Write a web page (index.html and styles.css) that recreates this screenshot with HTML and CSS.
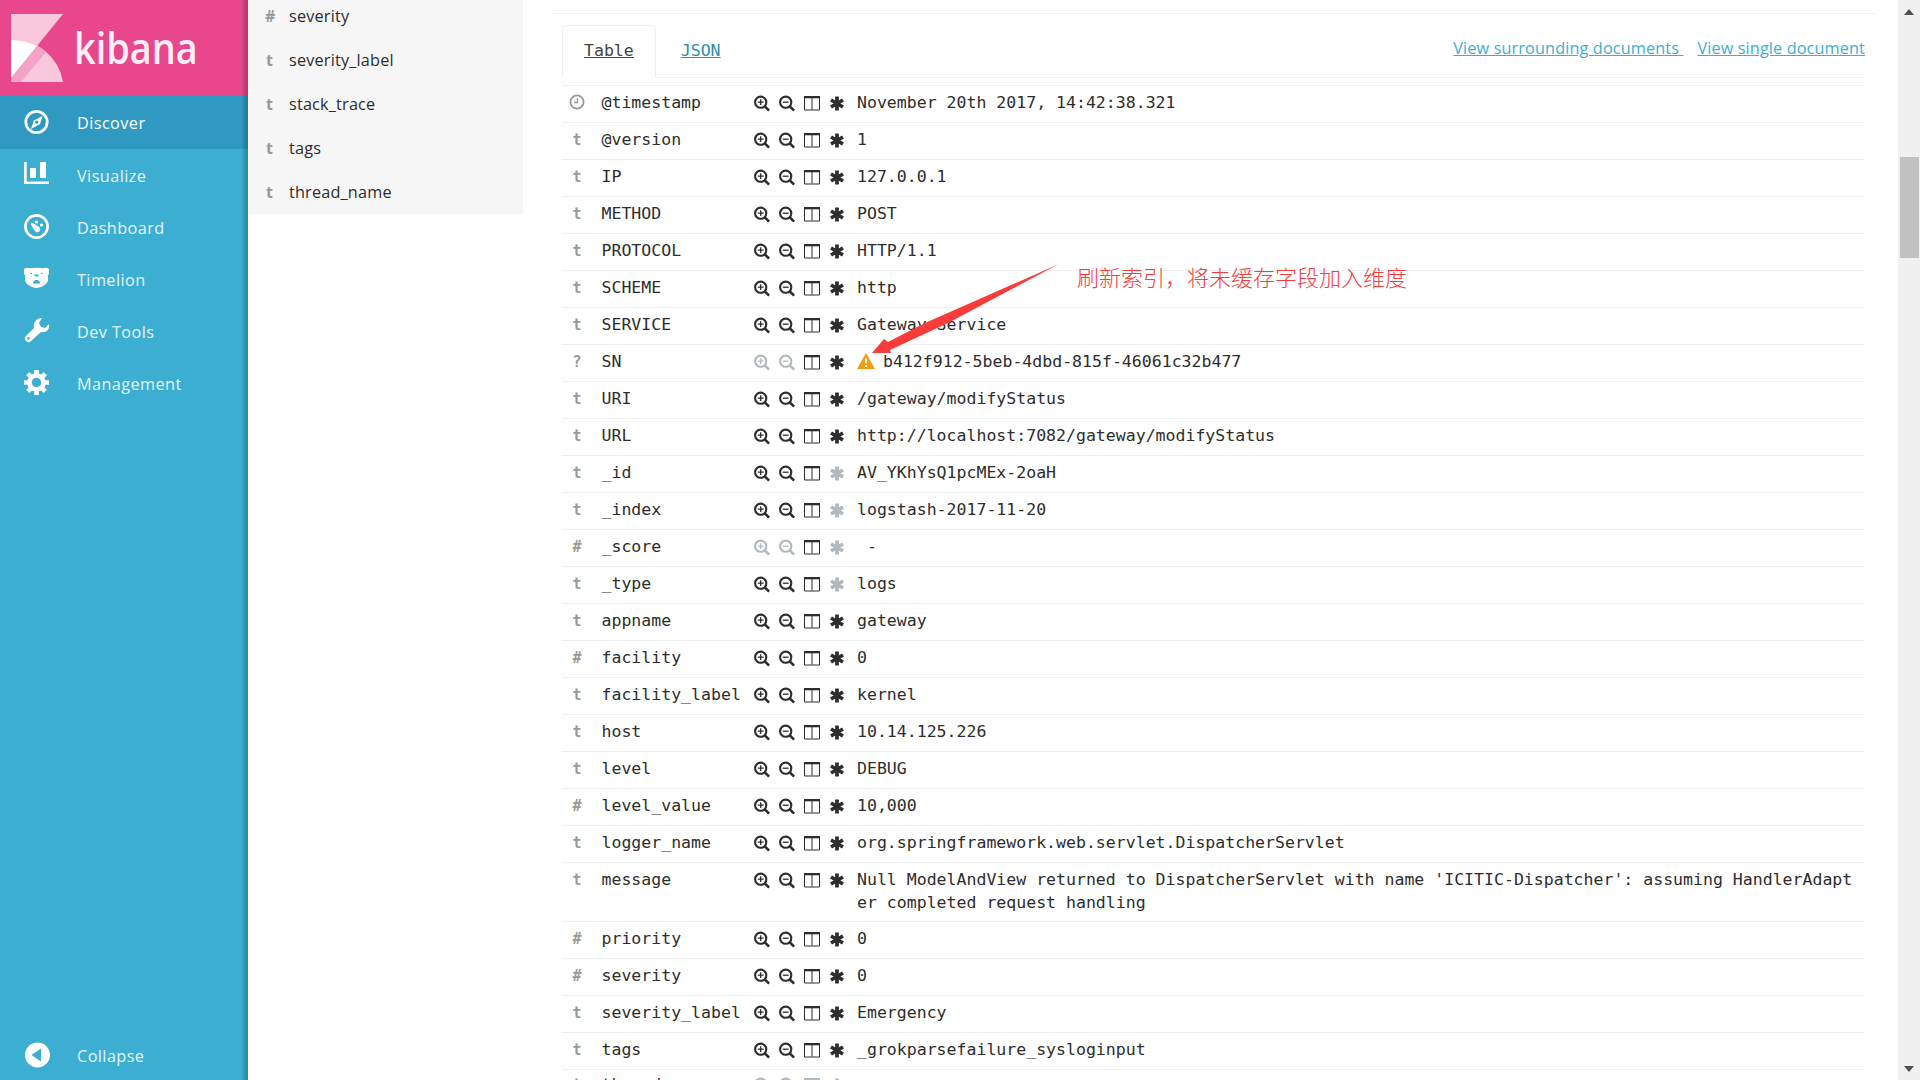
FILE: index.html
```html
<!DOCTYPE html>
<html lang="en">
<head>
<meta charset="utf-8">
<title>Kibana</title>
<link rel="stylesheet" href="styles.css">
</head>
<body>
<svg class="defs" aria-hidden="true">
  <symbol id="plus" viewBox="0 0 16 16"><circle cx="6.7" cy="6.7" r="5.6" fill="none" stroke="currentColor" stroke-width="2.1"/><path d="M10.8 10.8l4.300 4.300" stroke="currentColor" stroke-width="2.6"/><path d="M3.8 6.7h5.8M6.7 3.8v5.8" stroke="currentColor" stroke-width="1.3"/></symbol>
  <symbol id="minus" viewBox="0 0 16 16"><circle cx="6.7" cy="6.7" r="5.6" fill="none" stroke="currentColor" stroke-width="2.1"/><path d="M10.8 10.8l4.300 4.300" stroke="currentColor" stroke-width="2.6"/><path d="M3.8 6.7h5.8" stroke="currentColor" stroke-width="1.3"/></symbol>
  <symbol id="cols" viewBox="0 0 16 16"><path d="M.5 1h15v13.500H.5zM8 1v13" fill="none" stroke="currentColor" stroke-width="1"/><path d="M0 .5h16v2.300H0z" fill="currentColor"/></symbol>
  <symbol id="star" viewBox="0 0 16 16"><path d="M8 1v14M2 4.500l12 7M14 4.500l-12 7" stroke="currentColor" stroke-width="3.700"/></symbol>
</svg>
<div class="app">
  <nav class="side">
    <div class="brand">
      <svg class="mark" width="52" height="68" viewBox="0 0 52 68"><path d="M0 0h52L0 64z" fill="#f9c8dc"/><path d="M0 26a50 50 0 0 1 52 42H0z" fill="#f9c8dc"/><path d="M0 26q13 0 26 6L0 64z" fill="#fff"/><path d="M26 32q5 3 9 6L10 68H0v-4z" fill="#f4a3c6"/></svg>
      <span class="word">kibana</span>
    </div>
    <a class="item on"><svg width="26" height="26" viewBox="0 0 26 26"><circle cx="12.500" cy="13" r="10.700" fill="none" stroke="#fff" stroke-width="2.700"/><path fill-rule="evenodd" d="M18.500 7l-2.500 8-9 5 2.700-8.500zM12.700 11.500a1.600 1.600 0 1 0 .1 0z" fill="#fff"/></svg><span>Discover</span></a>
    <a class="item"><svg width="26" height="26" viewBox="0 0 26 26"><path d="M0 0h2.700v19.500H25V22H0zM6 6h6v10H6zM16 0h6v16h-6z" fill="#fff"/></svg><span>Visualize</span></a>
    <a class="item"><svg width="26" height="26" viewBox="0 0 26 26"><circle cx="12.500" cy="12.500" r="11.100" fill="none" stroke="#fff" stroke-width="2.700"/><g fill="#fff"><path d="M6.500 10l1.500-1.500 6.500 4a3 3 0 1 1-4 4z"/><circle cx="12.500" cy="8" r="1.600"/><circle cx="17.500" cy="11" r="1.600"/></g></svg><span>Dashboard</span></a>
    <a class="item"><svg width="26" height="26" viewBox="0 0 26 26"><path d="M0 3q3-2 6-.7 6.500-1.300 13 0Q22 1 25 3v5l-1 1v6q-3 6-11.500 7Q4 21 1 15V9L0 8z" fill="#fff"/><path d="M6 7l2 .7M19 7l-2 .7M10.500 9h4l-2 1.500zM9 17l2-2.500h3l2 2.500z" stroke="#3caed2" fill="#3caed2"/></svg><span>Timelion</span></a>
    <a class="item"><svg width="26" height="26" viewBox="0 0 26 26"><path fill-rule="evenodd" d="M18 0l-3 5 2 4 4 1 4-4c1 6-3 9-8 8L7 23a3 3 0 0 1-5-5l8-8C9 4 13 0 18 0zM4.500 19a1.300 1.300 0 1 0 .1 0z" fill="#fff"/></svg><span>Dev Tools</span></a>
    <a class="item"><svg width="26" height="26" viewBox="0 0 26 26"><circle cx="12.500" cy="12.500" r="7" fill="none" stroke="#fff" stroke-width="4.500"/><path d="M12.500 0v5M12.500 20v5M0 12.500h5M20 12.500h5M3.700 3.700l3.500 3.500M17.800 17.800l3.500 3.500M21.300 3.700l-3.500 3.500M7.200 17.800l-3.500 3.500" stroke="#fff" stroke-width="4.600"/></svg><span>Management</span></a>
    <a class="item collapse"><svg width="26" height="26" viewBox="0 0 26 26"><circle cx="13.500" cy="13" r="12.500" fill="#fff"/><path d="M7.500 13L17 6.500v13z" fill="#3caed2"/></svg><span>Collapse</span></a>
  </nav>
  <aside class="fields">
    <div><b>#</b>severity</div><div><b>t</b>severity_label</div><div><b>t</b>stack_trace</div><div><b>t</b>tags</div><div><b>t</b>thread_name</div>
  </aside>
  <main class="doc">
    <div class="detail">
      <div class="tabs"><a class="tab active">Table</a><a class="tab">JSON</a><span class="links"><a>View surrounding documents&nbsp;</a><a>View single document</a></span></div>
      <div class="rows" id="rows"></div>
    </div>
    <svg class="arrow" width="190" height="94" viewBox="0 0 190 94"><path d="M-1 89L11 75l4 3 37-19L186 0 75 59 17 86l1 3z" fill="#fb3a3a"/></svg>
    <div class="note">刷新索引，将未缓存字段加入维度</div>
  </main>
  <div class="scroll"><i class="up"></i><i class="thumb"></i><i class="down"></i></div>
</div>
<script src="rows.js"></script>
</body>
</html>
```
FILE: styles.css
```css
* { box-sizing: border-box; }
body { margin: 0; font-family: "Open Sans", "Noto Sans CJK SC", sans-serif; color: #2d2d2d; background: #fff; overflow: hidden; }
.defs { position: absolute; width: 0; height: 0; }
.app { display: flex; width: 1920px; height: 1080px; overflow: hidden; }
.side { width: 248px; background: linear-gradient(to right, transparent 241px, rgba(0,0,0,.2) 246px), #3caed2; display: flex; flex-direction: column; flex: none; }
.brand { height: 96px; padding: 14px 0 0 11px; display: flex; background: linear-gradient(to right, transparent 241px, rgba(0,0,0,.2) 246px), #e8488b; }
.word { margin: 0 0 0 11px; font: 600 43px/68px "Open Sans", sans-serif; color: #fdeef5; transform-origin: left; transform: scaleX(.88); }
.item { height: 52.2px; display: flex; align-items: center; padding-left: 24px; font-size: 16.250px; letter-spacing: .42px; color: #e4f4f9; flex: none; }
.item svg { margin-right: 27px; margin-top: -1px; }
.item span { padding-top: 1px; }
.item.on { height: 53px; background: linear-gradient(to right, transparent 241px, rgba(0,0,0,.2) 246px), #3099c2; color: #fff; }
.collapse { margin-top: auto; margin-bottom: -2px; }
.fields { width: 275px; height: 214px; background: #f6f6f6; overflow: hidden; flex: none; }
.fields div { height: 44px; line-height: 44px; padding-left: 15px; font-size: 16.250px; letter-spacing: .18px; display: flex; }
.fields div:first-child { margin-top: -6px; }
.fields b { width: 26px; padding-left: 3px; color: #999; font-size: 16px; }
.fields div:first-child b { padding-left: 2px; }
.doc { flex: 1; position: relative; padding: 13px 23px 0 28px; }
.detail { border-top: 1px solid #ecf0f1; padding: 11px 10px 0 11px; }
.tabs { display: flex; height: 53px; border-bottom: 1px solid #ecf0f1; font: 16.540px/20px "DejaVu Sans Mono", monospace; }
.tab { height: 53px; padding: 15px 21px; border: 1px solid transparent; color: #328caa; text-decoration: underline; }
.tab.active { border-color: #ecf0f1; border-bottom-color: #fff; border-radius: 5px 5px 0 0; color: #444; }
.tab + .tab { padding-left: 24px; }
.links { margin-left: auto; display: flex; gap: 14px; font: 16.250px/22px "Open Sans", sans-serif; letter-spacing: .12px; padding-top: 12px; color: #3caed2; text-decoration: underline; }
.rows { margin-top: 7px; font: 16.540px/23px "DejaVu Sans Mono", monospace; }
.row { display: grid; grid-template-columns: 39.500px 152px 103.500px 1fr; min-height: 37px; border-top: 1px solid #ecf0f1; padding-top: 5px; }
.row.tall { min-height: 59px; }
.row:last-child { padding-top: 3px; }
.row:last-child .acts { color: #b1b9be; }
.type { color: #999; text-align: center; width: 30px; font-weight: bold; font-size: 15px; padding-top: 1px; }
.type svg { display: block; margin: 2px auto 0; }
.acts { display: flex; gap: 9.200px; padding-top: 4px; }
.acts svg { width: 16px; height: 17px; flex: none; }
.acts .off { color: #b1b9be; }
.val { white-space: pre; }
.warn { margin-right: 8px; vertical-align: -2px; }
.arrow { position: absolute; left: 350px; top: 264px; overflow: visible; }
.note { position: absolute; left: 554px; top: 260px; font: 22px/32px "Noto Sans CJK SC", sans-serif; font-weight: 300; color: #fb3a3a; white-space: nowrap; }
.scroll { width: 22px; background: #f0f0f0; position: relative; flex: none; }
.scroll i { position: absolute; }
.thumb { left: 2px; top: 157px; width: 19px; height: 101px; background: #c1c1c1; }
.up, .down { left: 6px; border: 5.500px solid transparent; }
.up { top: 9px; border-top: 0; border-bottom: 6px solid #505050; }
.down { bottom: 8px; border-bottom: 0; border-top: 6px solid #505050; }
```
FILE: rows.js
```js
const data = [
  ["c", "@timestamp", "November 20th 2017, 14:42:38.321"],
  ["t", "@version", "1"],
  ["t", "IP", "127.0.0.1"],
  ["t", "METHOD", "POST"],
  ["t", "PROTOCOL", "HTTP/1.1"],
  ["t", "SCHEME", "http"],
  ["t", "SERVICE", "Gateway-Service"],
  ["?", "SN", "b412f912-5beb-4dbd-815f-46061c32b477", "1100"],
  ["t", "URI", "/gateway/modifyStatus"],
  ["t", "URL", "http://localhost:7082/gateway/modifyStatus"],
  ["t", "_id", "AV_YKhYsQ1pcMEx-2oaH", "0001"],
  ["t", "_index", "logstash-2017-11-20", "0001"],
  ["#", "_score", " -", "1101"],
  ["t", "_type", "logs", "0001"],
  ["t", "appname", "gateway"],
  ["#", "facility", "0"],
  ["t", "facility_label", "kernel"],
  ["t", "host", "10.14.125.226"],
  ["t", "level", "DEBUG"],
  ["#", "level_value", "10,000"],
  ["t", "logger_name", "org.springframework.web.servlet.DispatcherServlet"],
  ["t", "message", "Null ModelAndView returned to DispatcherServlet with name 'ICITIC-Dispatcher': assuming HandlerAdapt\ner completed request handling"],
  ["#", "priority", "0"],
  ["#", "severity", "0"],
  ["t", "severity_label", "Emergency"],
  ["t", "tags", "_grokparsefailure_sysloginput"],
  ["t", "thread_name", ""]
];
const clock = '<svg width="16" height="16" viewBox="0 0 16 16" fill="none" stroke="#999"><circle cx="8" cy="8" r="6.600" stroke-width="1.800"/><path d="M8.500 4v4.500H5" stroke-width="1.300"/></svg>';
const warn = '<svg class="warn" width="18" height="16" viewBox="0 0 18 16"><path d="M9 0l9 16H0z" fill="#f39c12"/><path d="M9 5.500v5M9 12v2" stroke="#fff" stroke-width="2"/></svg>';
document.getElementById("rows").innerHTML = data.map(([type, name, value, off = "0000"]) => {
  const icons = ["plus", "minus", "cols", "star"].map((id, i) => `<svg class="${off[i] === "1" ? "off" : ""}"><use href="#${id}"/></svg>`).join("");
  return `<div class="row${name === "message" ? " tall" : ""}"><div class="type">${type === "c" ? clock : type}</div><div>${name}</div><div class="acts">${icons}</div><div class="val">${name === "SN" ? warn : ""}${value}</div></div>`;
}).join("");
```
